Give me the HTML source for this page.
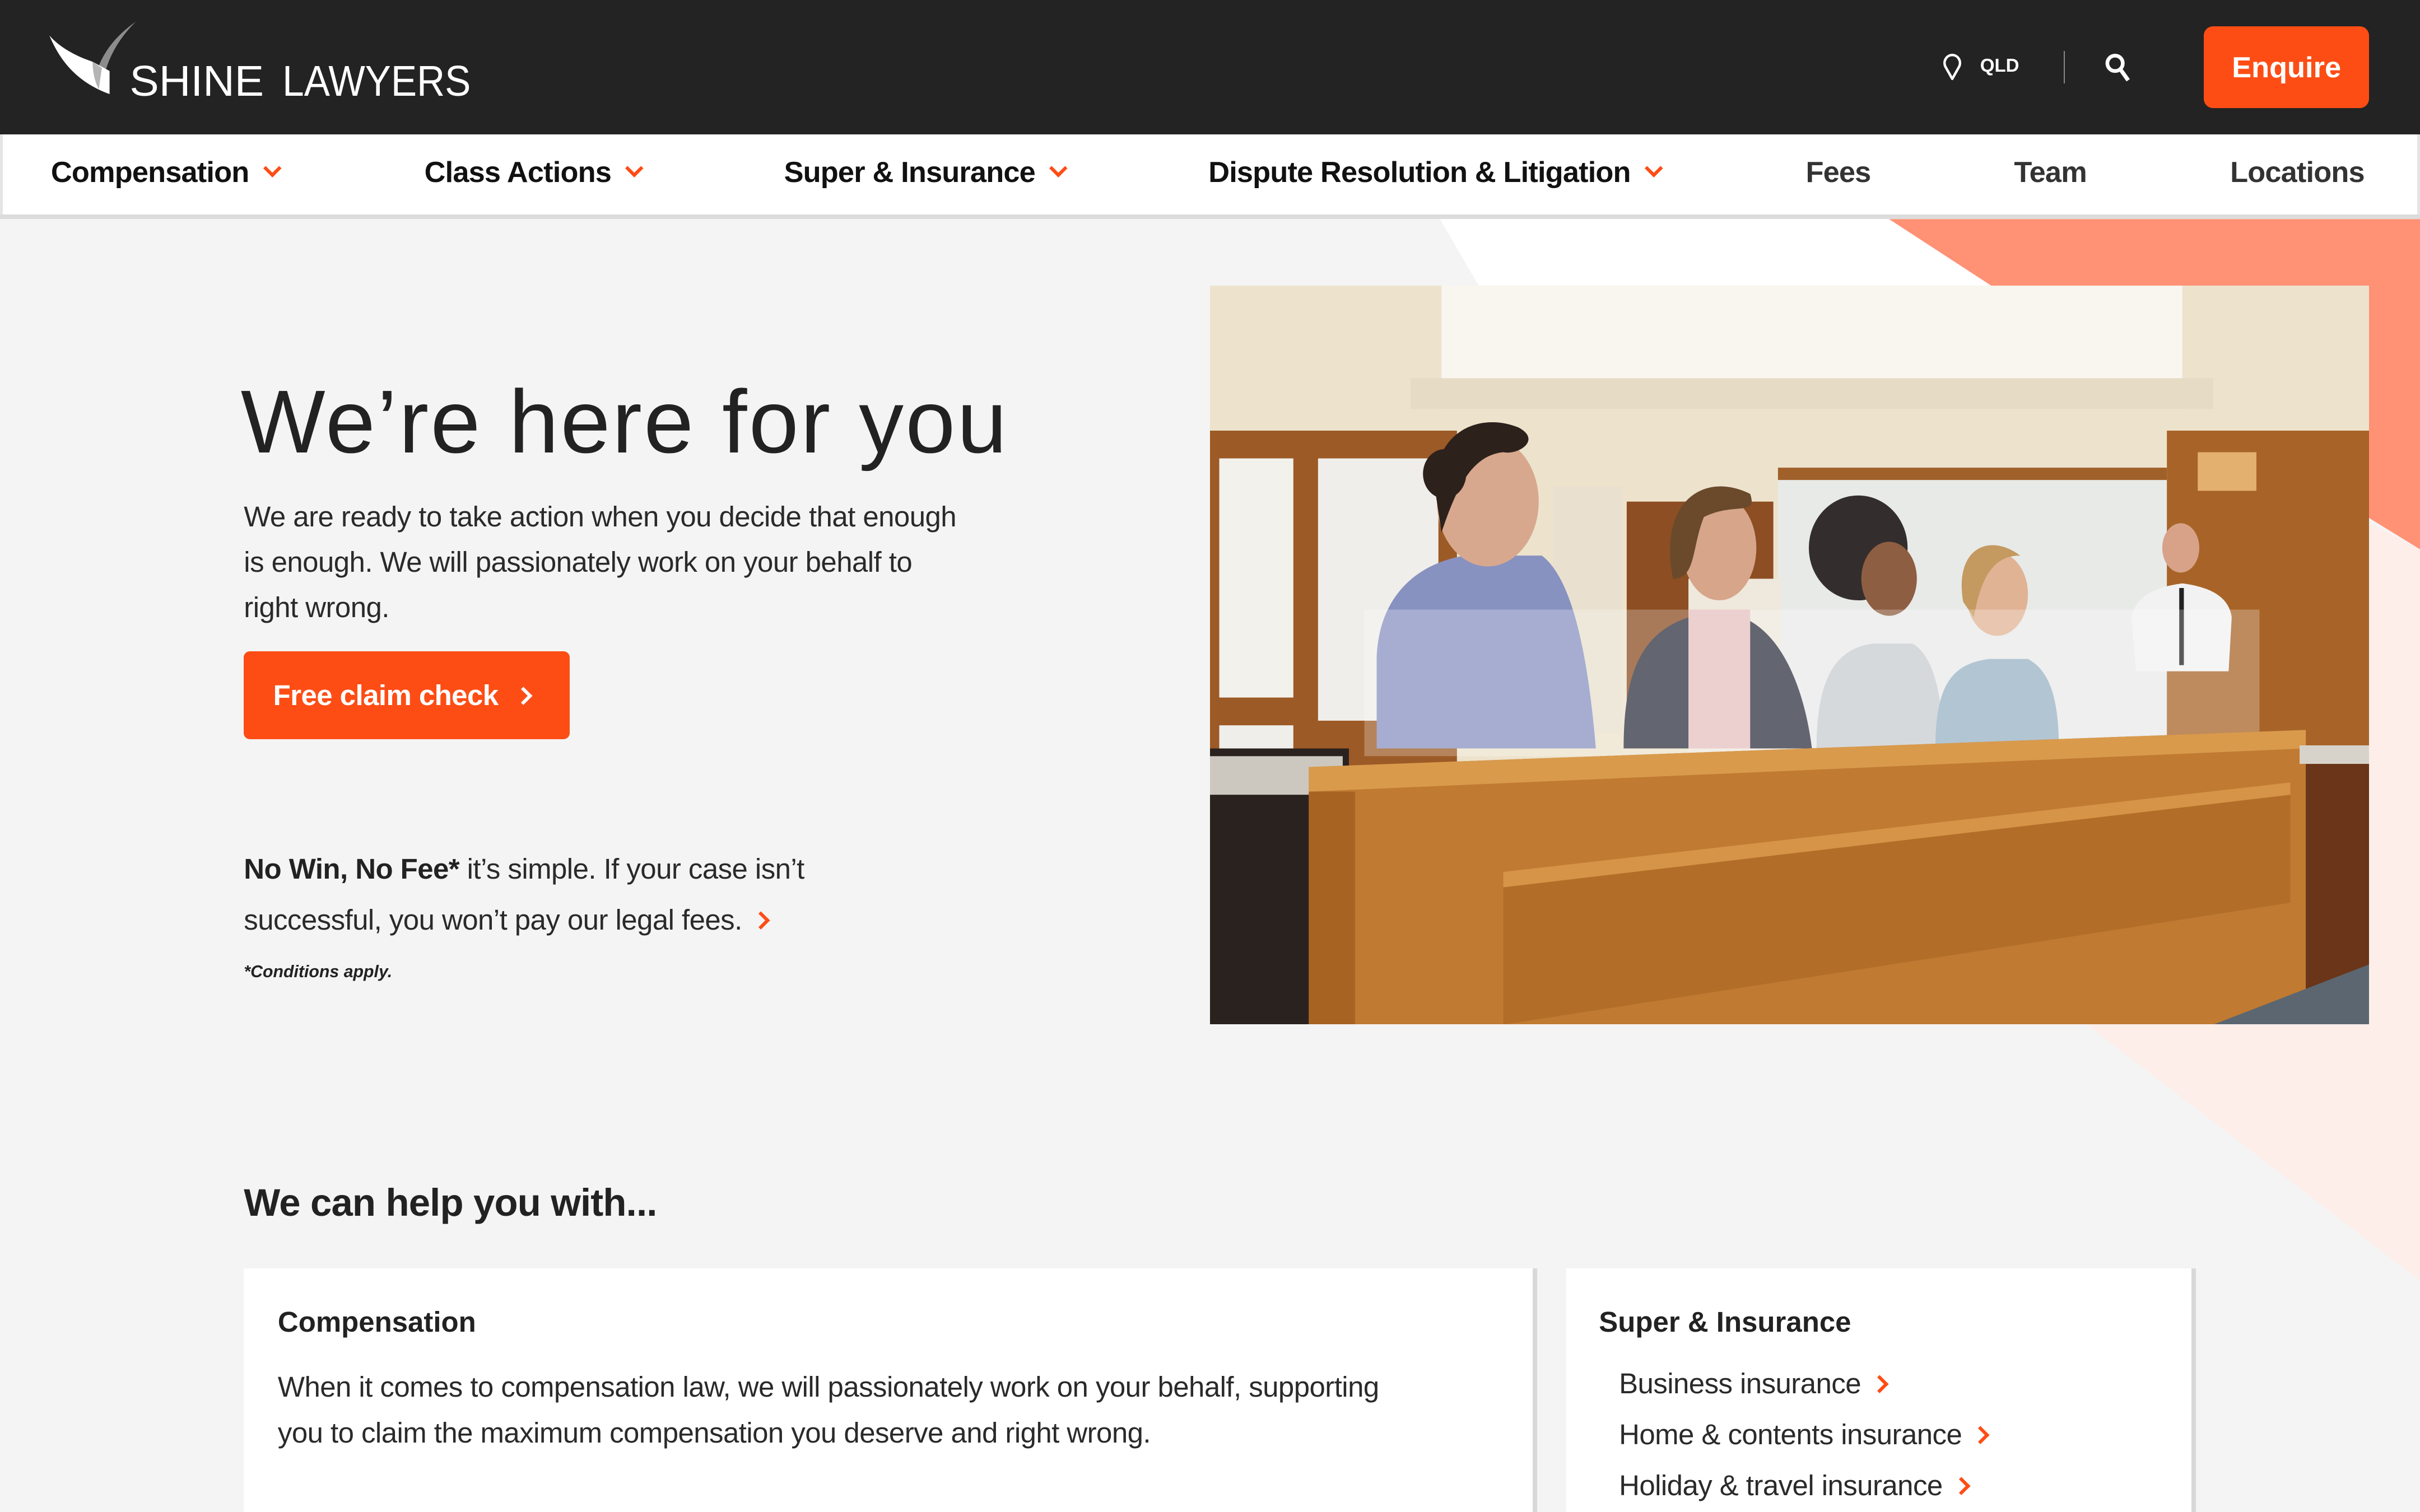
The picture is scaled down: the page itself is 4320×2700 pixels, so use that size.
<!DOCTYPE html>
<html><head><meta charset="utf-8">
<style>
html,body{margin:0;padding:0;}
body{width:4320px;height:2700px;overflow:hidden;background:#f4f4f4;}
#w{position:relative;width:1568px;height:980px;zoom:2.7551;overflow:hidden;background:#f4f4f4;font-family:"Liberation Sans",Arial,sans-serif;color:#262626;}
.a{position:absolute;white-space:nowrap;}
.nav{font-weight:bold;font-size:19px;color:#111;top:101px;letter-spacing:-0.3px;}
.chev{display:inline-block;width:6px;height:6px;border-right:2.2px solid #fd4d15;border-bottom:2.2px solid #fd4d15;transform:rotate(45deg);margin-left:11px;position:relative;top:-5px;}
.p{font-size:18.5px;color:#2a2a2a;letter-spacing:-0.2px;}
.rc{display:inline-block;width:6px;height:6px;border-right:2.2px solid #fd4d15;border-top:2.2px solid #fd4d15;transform:rotate(45deg);margin-left:8px;position:relative;top:-2px;}
</style></head><body><div id="w">

<svg class="a" style="left:0;top:0" width="1568" height="980">
<polygon points="933,142 1224,142 1290,185 958,185" fill="#ffffff"/>
<polygon points="1224,142 1568,142 1568,356 1290,185" fill="#ff9175"/>
<polygon points="1535,339 1568,356 1568,830 1352,664 1535,664" fill="#fdeee9"/>
</svg>

<div class="a" style="left:0;top:0;width:1568px;height:87px;background:#232323"></div>
<svg class="a" style="left:0;top:0" width="320" height="80">
<path d="M88,14 C74,24 64,36 60,56 L66,58 C68,40 76,26 88,14Z" fill="#8c8c8c"/>
<path d="M32,23 C40,42 52,54 71,61 L71,46 L60,40 C48,36 38,30 32,23Z" fill="#ffffff"/>
<path d="M60,40 L66,44 L64,58 C62,54 60,48 60,40Z" fill="#b5b5b5"/>
<text x="84" y="62" fill="#fff" font-family="Liberation Sans" font-size="28" textLength="87" lengthAdjust="spacingAndGlyphs">SHINE</text>
<text x="183" y="62" fill="#fff" font-family="Liberation Sans" font-size="28" textLength="122" lengthAdjust="spacingAndGlyphs">LAWYERS</text>
</svg>
<svg class="a" style="left:1257px;top:34px" width="16" height="20"><path d="M8,17 L3.5,9 A5,5.2 0 1 1 12.5,9 Z" fill="none" stroke="#fff" stroke-width="1.6" stroke-linejoin="round"/></svg>
<div class="a" style="left:1283px;top:36px;font-size:12px;font-weight:bold;color:#fff">QLD</div>
<div class="a" style="left:1337px;top:33px;width:1px;height:21px;background:#888"></div>
<svg class="a" style="left:1363px;top:33px" width="20" height="22"><circle cx="7.5" cy="8" r="5" fill="none" stroke="#fff" stroke-width="2.4"/><line x1="11" y1="12" x2="16" y2="19" stroke="#fff" stroke-width="2.6"/></svg>
<div class="a" style="left:1428px;top:17px;width:107px;height:53px;background:#fd4d15;border-radius:6px"></div>
<div class="a" style="left:1428px;top:33px;width:107px;text-align:center;font-size:19px;font-weight:bold;color:#fff">Enquire</div>

<div class="a" style="left:0;top:87px;height:52px;background:#fff;border-left:2px solid #e5e5e5;box-sizing:border-box;width:1568px;border-right:2px solid #e5e5e5"></div>
<div class="a" style="left:0;top:139px;width:1568px;height:3px;background:#dcdcdc"></div>
<div class="a nav" style="left:33px">Compensation<span class="chev"></span></div>
<div class="a nav" style="left:275px">Class Actions<span class="chev"></span></div>
<div class="a nav" style="left:508px">Super &amp; Insurance<span class="chev"></span></div>
<div class="a nav" style="left:783px">Dispute Resolution &amp; Litigation<span class="chev"></span></div>
<div class="a nav" style="left:1170px;color:#333">Fees</div>
<div class="a nav" style="left:1305px;color:#333">Team</div>
<div class="a nav" style="left:1445px;color:#333">Locations</div>

<div class="a" style="left:156px;top:240px;font-size:58px;color:#222;letter-spacing:1.2px">We’re here for you</div>
<div class="a p" style="left:158px;top:320px;line-height:29.5px;white-space:normal;width:470px">We are ready to take action when you decide that enough is enough. We will passionately work on your behalf to right wrong.</div>
<div class="a" style="left:158px;top:422px;width:211px;height:57px;background:#fd4d15;border-radius:4px"></div>
<div class="a" style="left:177px;top:440px;font-size:18.5px;font-weight:bold;color:#fff;letter-spacing:-0.2px">Free claim check<span class="rc" style="border-color:#fff;margin-left:12px"></span></div>
<div class="a p" style="left:158px;top:547px;line-height:33px;white-space:normal;width:440px"><b style="color:#222">No Win, No Fee*</b> it’s simple. If your case isn’t successful, you won’t pay our legal fees.<span class="rc"></span></div>
<div class="a" style="left:158px;top:624px;font-size:11px;font-weight:bold;font-style:italic;color:#222">*Conditions apply.</div>

<svg class="a" style="left:784px;top:185px" width="751" height="479" viewBox="0 0 751 479">
<rect width="751" height="479" fill="#ede3cc"/>
<rect x="150" y="0" width="480" height="80" fill="#f8f6ef"/>
<rect x="130" y="60" width="520" height="20" fill="#e6dcc6"/>
<rect x="0" y="94" width="160" height="260" fill="#9c5a26"/>
<rect x="6" y="112" width="48" height="155" fill="#f3f1ec"/>
<rect x="70" y="112" width="78" height="170" fill="#f0eeea"/>
<rect x="6" y="285" width="48" height="60" fill="#f0eeea"/>
<rect x="222" y="130" width="45" height="160" fill="#e9e0cf"/>
<rect x="270" y="140" width="95" height="150" fill="#8c4e22"/>
<rect x="368" y="124" width="252" height="180" fill="#e8eae8"/>
<rect x="368" y="118" width="252" height="8" fill="#a0602a"/>
<rect x="620" y="94" width="131" height="385" fill="#a86428"/>
<rect x="640" y="108" width="38" height="25" fill="#e3b070"/>
<rect x="310" y="190" width="60" height="140" fill="#efe8dc"/>
<path d="M108,240 C110,200 135,180 165,175 L215,175 C235,190 245,240 250,300 L108,300Z" fill="#8892c0"/>
<ellipse cx="180" cy="140" rx="33" ry="42" fill="#d8a88e"/>
<path d="M147,140 C140,100 170,80 200,92 C215,100 200,110 190,108 C170,110 160,130 150,160Z" fill="#2d211c"/>
<ellipse cx="152" cy="122" rx="14" ry="16" fill="#2d211c"/>
<path d="M268,300 C268,250 280,225 310,215 L345,215 C370,225 385,260 390,300Z" fill="#2f3240"/>
<rect x="310" y="210" width="40" height="90" fill="#e6c0c0"/>
<ellipse cx="330" cy="170" rx="24" ry="34" fill="#d6a58a"/>
<path d="M300,190 C290,140 320,120 350,135 C355,150 340,140 320,150 C312,170 315,190 300,190Z" fill="#6b4a2c"/>
<path d="M393,300 C393,255 405,235 430,232 L455,232 C470,240 475,270 475,300Z" fill="#c9ccd0"/>
<ellipse cx="420" cy="170" rx="32" ry="34" fill="#1f1a18" opacity="0.9"/>
<ellipse cx="440" cy="190" rx="18" ry="24" fill="#8e5e42"/>
<path d="M470,300 C470,260 480,245 505,242 L530,242 C545,250 550,270 550,300Z" fill="#98b2c4"/>
<ellipse cx="510" cy="200" rx="20" ry="27" fill="#e0b394"/>
<path d="M488,205 C482,170 505,160 525,175 C510,175 500,185 495,215Z" fill="#c49a60"/>
<path d="M597,215 C600,200 615,195 630,193 C645,195 660,200 662,215 L660,250 L600,250Z" fill="#f2f2f2"/>
<rect x="628" y="196" width="3" height="50" fill="#222"/>
<ellipse cx="629" cy="170" rx="12" ry="16" fill="#d7a288"/>
<rect x="100" y="210" width="580" height="95" fill="#ffffff" opacity="0.25"/>
<rect x="0" y="300" width="90" height="179" fill="#2a221f"/>
<rect x="0" y="305" width="86" height="25" fill="#ccc8c0"/>
<polygon points="64,312 710,288 710,479 64,479" fill="#c07a32"/>
<polygon points="64,312 710,288 710,300 64,328" fill="#d99a4c"/>
<polygon points="190,380 700,322 700,400 190,479" fill="#b26e28"/>
<polygon points="190,380 700,322 700,330 190,390" fill="#d69448"/>
<polygon points="64,328 94,328 94,479 64,479" fill="#a76322"/>
<rect x="710" y="300" width="41" height="179" fill="#6a3518"/>
<rect x="706" y="298" width="45" height="12" fill="#d8d3ca"/>
<polygon points="650,479 751,440 751,479" fill="#5b6670"/>
</svg>

<div class="a" style="left:158px;top:765px;font-size:25px;font-weight:bold;color:#222;letter-spacing:-0.3px">We can help you with...</div>
<div class="a" style="left:158px;top:822px;width:835px;height:160px;background:#fff;border-right:3px solid #d8d8d8"></div>
<div class="a" style="left:180px;top:846px;font-size:18.5px;font-weight:bold;color:#222">Compensation</div>
<div class="a p" style="left:180px;top:884px;line-height:30px;white-space:normal;width:745px">When it comes to compensation law, we will passionately work on your behalf, supporting you to claim the maximum compensation you deserve and right wrong.</div>
<div class="a" style="left:1015px;top:822px;width:405px;height:160px;background:#fff;border-right:3px solid #d8d8d8"></div>
<div class="a" style="left:1036px;top:846px;font-size:18.5px;font-weight:bold;color:#222">Super &amp; Insurance</div>
<div class="a p" style="left:1049px;top:886px">Business insurance<span class="rc"></span></div>
<div class="a p" style="left:1049px;top:919px">Home &amp; contents insurance<span class="rc"></span></div>
<div class="a p" style="left:1049px;top:952px">Holiday &amp; travel insurance<span class="rc"></span></div>

</div></body></html>
